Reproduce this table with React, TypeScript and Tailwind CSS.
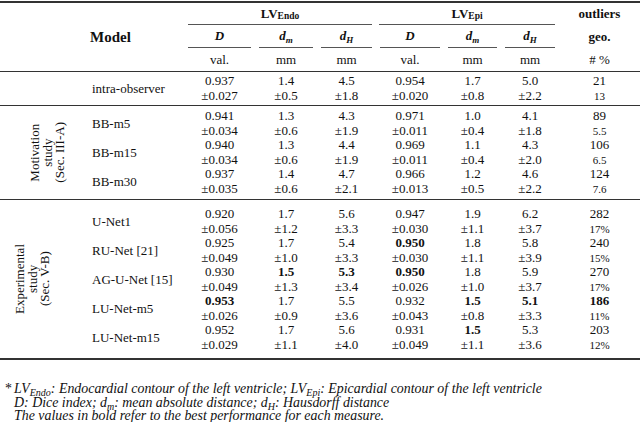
import React from 'react';

type Cell = [string, string];

interface Row {
  name: string;
  cells: Cell[];
}

// "!" prefix marks a bold value
const intra: Row[] = [
  {
    name: 'intra-observer',
    cells: [
      ['0.937', '±0.027'], ['1.4', '±0.5'], ['4.5', '±1.8'],
      ['0.954', '±0.020'], ['1.7', '±0.8'], ['5.0', '±2.2'], ['21', '13'],
    ],
  },
];

const motivation: Row[] = [
  {
    name: 'BB-m5',
    cells: [
      ['0.941', '±0.034'], ['1.3', '±0.6'], ['4.3', '±1.9'],
      ['0.971', '±0.011'], ['1.0', '±0.4'], ['4.1', '±1.8'], ['89', '5.5'],
    ],
  },
  {
    name: 'BB-m15',
    cells: [
      ['0.940', '±0.034'], ['1.3', '±0.6'], ['4.4', '±1.9'],
      ['0.969', '±0.011'], ['1.1', '±0.4'], ['4.3', '±2.0'], ['106', '6.5'],
    ],
  },
  {
    name: 'BB-m30',
    cells: [
      ['0.937', '±0.035'], ['1.4', '±0.6'], ['4.7', '±2.1'],
      ['0.966', '±0.013'], ['1.2', '±0.5'], ['4.6', '±2.2'], ['124', '7.6'],
    ],
  },
];

const experimental: Row[] = [
  {
    name: 'U-Net1',
    cells: [
      ['0.920', '±0.056'], ['1.7', '±1.2'], ['5.6', '±3.3'],
      ['0.947', '±0.030'], ['1.9', '±1.1'], ['6.2', '±3.7'], ['282', '17%'],
    ],
  },
  {
    name: 'RU-Net [21]',
    cells: [
      ['0.925', '±0.049'], ['1.7', '±1.0'], ['5.4', '±3.3'],
      ['!0.950', '±0.030'], ['1.8', '±1.1'], ['5.8', '±3.9'], ['240', '15%'],
    ],
  },
  {
    name: 'AG-U-Net [15]',
    cells: [
      ['0.930', '±0.049'], ['!1.5', '±1.3'], ['!5.3', '±3.4'],
      ['!0.950', '±0.026'], ['1.8', '±1.0'], ['5.9', '±3.7'], ['270', '17%'],
    ],
  },
  {
    name: 'LU-Net-m5',
    cells: [
      ['!0.953', '±0.026'], ['1.7', '±0.9'], ['5.5', '±3.6'],
      ['0.932', '±0.043'], ['!1.5', '±0.8'], ['!5.1', '±3.3'], ['!186', '11%'],
    ],
  },
  {
    name: 'LU-Net-m15',
    cells: [
      ['0.952', '±0.029'], ['1.7', '±1.1'], ['5.6', '±4.0'],
      ['0.931', '±0.049'], ['!1.5', '±1.1'], ['5.3', '±3.6'], ['203', '12%'],
    ],
  },
];

const grid = 'grid grid-cols-[104px_71px_62px_59px_68px_57px_58px_81px]';

function Val({ v }: { v: string }) {
  const bold = v.startsWith('!');
  return <span className={bold ? 'font-bold' : ''}>{bold ? v.slice(1) : v}</span>;
}

function DataRow({ row }: { row: Row }) {
  return (
    <div className={`${grid} h-[29px]`}>
      <div className="flex items-center pl-[12px]">{row.name}</div>
      {row.cells.map(([v, sd], i) => (
        <div key={i} className="flex flex-col items-center justify-center leading-[14.5px]">
          <Val v={v} />
          {i === 6 ? <span className="text-[11px]">{sd}</span> : <span>{sd}</span>}
        </div>
      ))}
    </div>
  );
}

function Section({
  label,
  labelPad = '',
  rows,
  className,
}: {
  label?: string[];
  labelPad?: string;
  rows: Row[];
  className: string;
}) {
  return (
    <div className={`flex ${className}`}>
      <div className={`w-[80px] flex items-center justify-center ${labelPad}`}>
        {label && (
          <div className="[writing-mode:vertical-rl] rotate-180 text-center leading-[12.5px] text-[13px]">
            {label.map((l) => (
              <div key={l}>{l}</div>
            ))}
          </div>
        )}
      </div>
      <div className="flex flex-col">
        {rows.map((r) => (
          <DataRow key={r.name} row={r} />
        ))}
      </div>
    </div>
  );
}

function Sub({ base, sub }: { base: string; sub: string }) {
  return (
    <span className="font-bold italic">
      {base}
      <span className="text-[9px] leading-none relative top-[3px]">{sub}</span>
    </span>
  );
}

function Fsub({ children }: { children: React.ReactNode }) {
  return <span className="text-[10px] leading-none relative top-[3px]">{children}</span>;
}

export default function App() {
  return (
    <div
      className="w-[640px] h-[422px] bg-white text-[#111] text-[13px] overflow-hidden"
      style={{ fontFamily: '"Liberation Serif", "Times New Roman", serif' }}
    >
      <div className="mt-[1px] border-t-[2px] border-[#333]" />

      {/* header */}
      <div className="grid grid-cols-[80px_104px_71px_62px_59px_68px_57px_58px_81px] grid-rows-[22px_23px_23px]">
        <div className="row-span-3" />
        <div className="row-span-3 flex items-center pl-[10px] font-bold text-[15px]">Model</div>
        <div className="col-span-3 pl-[4px] pr-[4px]">
          <div className="h-full border-b border-[#555] flex items-center justify-center font-bold">
            LV<span className="text-[9.5px] leading-none relative top-[3px]">Endo</span>
          </div>
        </div>
        <div className="col-span-3 pl-[3px] pr-[4px]">
          <div className="h-full border-b border-[#555] flex items-center justify-center font-bold">
            LV<span className="text-[9.5px] leading-none relative top-[3px]">Epi</span>
          </div>
        </div>
        <div className="flex items-center justify-center font-bold">outliers</div>

        {[
          ['D', ''],
          ['d', 'm'],
          ['d', 'H'],
          ['D', ''],
          ['d', 'm'],
          ['d', 'H'],
        ].map(([b, s], i) => (
          <div key={i} className="px-[4px]">
            <div className="h-full border-b border-[#555] flex items-center justify-center">
              {s ? <Sub base={b} sub={s} /> : <span className="font-bold italic">{b}</span>}
            </div>
          </div>
        ))}
        <div className="flex items-center justify-center font-bold">geo.</div>

        {['val.', 'mm', 'mm', 'val.', 'mm', 'mm', '# %'].map((t, i) => (
          <div key={i} className="flex items-center justify-center">
            {t}
          </div>
        ))}
      </div>

      <div className="border-t-[1.5px] border-[#333]" />
      <Section rows={intra} className="pt-[2px] pb-[2px]" />
      <div className="border-t-[1.5px] border-[#333]" />
      <Section
        label={['Motivation', 'study', '(Sec. III-A)']}
        labelPad="pl-[16px]"
        rows={motivation}
        className="pt-[3px] pb-[3px]"
      />
      <div className="border-t-[1.5px] border-[#333]" />
      <Section
        label={['Experimental', 'study', '(Sec. V-B)']}
        labelPad="pr-[14px]"
        rows={experimental}
        className="pt-[7px] pb-[6px]"
      />
      <div className="border-t-[2px] border-[#333]" />

      {/* footnote */}
      <div className="mt-[22px] italic text-[13.9px] leading-[13.5px] pl-[14px]">
        <div className="relative">
          <span className="absolute left-[-9px] not-italic">*</span>
          LV<Fsub>Endo</Fsub>: Endocardial contour of the left ventricle; LV<Fsub>Epi</Fsub>: Epicardial contour
          of the left ventricle
        </div>
        <div>
          D: Dice index; d<Fsub>m</Fsub>: mean absolute distance; d<Fsub>H</Fsub>: Hausdorff distance
        </div>
        <div>The values in bold refer to the best performance for each measure.</div>
      </div>
    </div>
  );
}
